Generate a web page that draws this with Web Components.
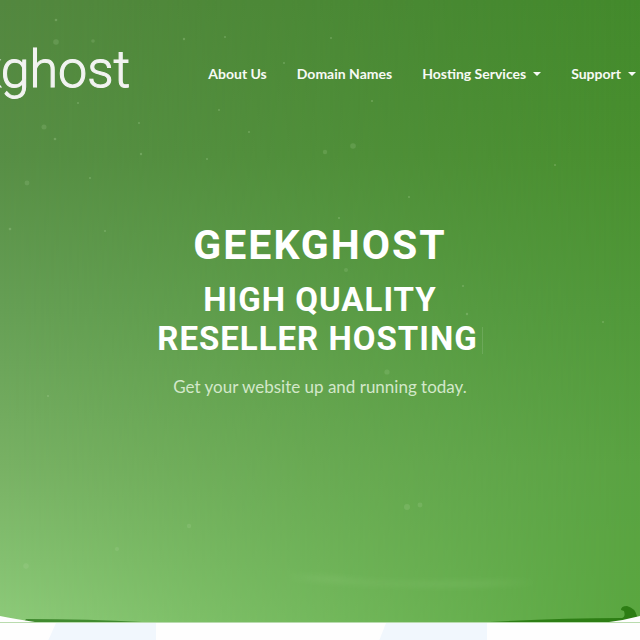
<!DOCTYPE html>
<html lang="en">
<head>
<meta charset="utf-8">
<meta name="viewport" content="width=device-width, initial-scale=1">
<title>GeekGhost</title>
<style>
body { margin: 0; background: #fefefe; font-family: Lato, "Open Sans", sans-serif; overflow: hidden; }
</style>
</head>
<body>
<hosting-page></hosting-page>
<script>
function define(name, html) {
  const template = document.createElement('template');
  template.innerHTML = html;
  customElements.define(name, class extends HTMLElement {
    constructor() {
      super();
      this.attachShadow({ mode: 'open' }).append(template.content.cloneNode(true));
    }
  });
}

define('brand-logo', `
<style>
:host { display: block; flex: none; }
a { display: block; color: #f2f3f1; font: 300 52px/72px Roboto, sans-serif; -webkit-text-stroke: 1px #f2f3f1; text-decoration: none; }
</style>
<a href="#" aria-label="geekghost home"><slot></slot></a>`);

define('nav-link', `
<style>
:host { display: block; flex: none; }
a { display: block; color: #f7faf5; font: 700 14px/20px Lato, sans-serif; text-decoration: none; white-space: nowrap; }
</style>
<a href="#"><slot></slot></a>`);

define('nav-menu', `
<style>
:host { display: block; flex: none; }
button { display: flex; align-items: center; gap: 7px; padding: 0; border: 0; background: none;
  color: #f7faf5; font: 700 14px/20px Lato, sans-serif; white-space: nowrap; }
svg { display: block; }
</style>
<button type="button" aria-haspopup="true"><slot></slot><svg width="8" height="4" viewBox="0 0 8 4" aria-hidden="true"><path d="M0 0H8L4 4Z" fill="currentColor"/></svg></button>`);

define('site-header', `
<style>
:host { display: flex; justify-content: flex-end; align-items: center; gap: 78px; padding: 34px 4px 0 0; }
nav { display: flex; align-items: center; gap: 30px; padding-top: 8px; }
</style>
<slot name="logo"></slot>
<nav aria-label="Main"><slot></slot></nav>`);

define('night-sky', `
<style>
:host { display: block; background: linear-gradient(#438a2c, #49902f 25%, #51993a 50%, #5aa342 75%, #5aa740); }
.left { width: 100%; height: 100%;
  background: linear-gradient(#53873f, #578e45 25%, #669f55 50%, #78b164 75%, #84c070 90%, #8dca79);
  -webkit-mask-image: linear-gradient(90deg, #000, transparent);
  mask-image: linear-gradient(90deg, #000, transparent); }
svg { position: absolute; inset: 0; width: 100%; height: 100%; }
</style>
<div class="left"></div>
<svg viewBox="0 0 640 622" preserveAspectRatio="none" aria-hidden="true">
<defs><filter id="haze" x="-10%" y="-100%" width="120%" height="300%"><feGaussianBlur stdDeviation="3"/></filter></defs>
<g fill="#b9dca8">
<g opacity=".28"><circle cx="56" cy="20" r="1.3"/><circle cx="184" cy="39" r="1.2"/><circle cx="225" cy="37" r="1"/><circle cx="55" cy="139" r="1.3"/><circle cx="141" cy="154" r="1.2"/><circle cx="90" cy="178" r="1"/><circle cx="10" cy="229" r="1.3"/><circle cx="105" cy="231" r="1"/><circle cx="249" cy="132" r="1"/><circle cx="372" cy="101" r="1.1"/><circle cx="207" cy="159" r="1"/><circle cx="339" cy="218" r="1.1"/><circle cx="463" cy="286" r="1"/><circle cx="467" cy="314" r="1.2"/><circle cx="603" cy="322" r="1"/><circle cx="555" cy="165" r="1"/><circle cx="331" cy="38" r="1"/><circle cx="284" cy="63" r="1"/><circle cx="409" cy="197" r="1"/><circle cx="219" cy="110" r="1"/><circle cx="139" cy="123" r="1"/><circle cx="78" cy="103" r="1"/><circle cx="48" cy="396" r="1.1"/></g>
<g opacity=".17"><circle cx="56" cy="42" r="2.8"/><circle cx="44" cy="127" r="2.5"/><circle cx="27" cy="183" r="2.4"/><circle cx="325" cy="152" r="2.2"/><circle cx="353" cy="146" r="2.8"/><circle cx="387" cy="372" r="2.6"/><circle cx="407" cy="507" r="3"/><circle cx="420" cy="505" r="2.4"/><circle cx="189" cy="526" r="2.2"/><circle cx="117" cy="549" r="2"/><circle cx="26" cy="566" r="2.7"/><circle cx="93" cy="41" r="1.8"/><circle cx="346" cy="270" r="2"/></g>
</g>
<path d="M285 577Q320 575 350 579T435 582T540 582L480 586Q400 587 330 582Z" fill="#a5d890" opacity=".2" filter="url(#haze)"/>
<path d="M26 619Q90 619 142 622H24Z" fill="#2e7a1e" opacity=".8"/>
<path d="M490 622Q560 618 622 618C625 617 625 614 624 611L621 610Q621 606 627 606Q635 608 637 616L640 622Z" fill="#28790f" opacity=".9"/>
<path d="M0 616Q15 619 35 622H0ZM640 616Q625 620 609 622H640Z" fill="#fefefe"/>
</svg>`);

define('hero-banner', `
<style>
:host { display: block; position: relative; padding-bottom: 223px; overflow: hidden; border-bottom: 1px solid #b9dbae; }
night-sky { position: absolute; inset: 0; }
.content { position: relative; }
.copy { padding: 114px 16px 0; text-align: center; color: #fff; }
h1, h2, p { margin: 0; }
h1 { font: 700 41px/50px Roboto, sans-serif; letter-spacing: 2px; }
h2 { margin-top: 10px; font: 700 33px/39px Roboto, sans-serif; letter-spacing: 1px; }
h2 span { display: block; }
.caret { display: inline-block; width: 1px; height: 27px; margin-left: 4px; background: #fff; opacity: .12; vertical-align: -4px; }
p { margin-top: 17px; font: 400 17px/24px Lato, sans-serif; color: #d3e8ca; }
</style>
<night-sky></night-sky>
<div class="content">
<slot name="header"></slot>
<div class="copy">
<h1>GEEKGHOST</h1>
<h2><span>HIGH QUALITY</span><span>RESELLER HOSTING<i class="caret"></i></span></h2>
<p>Get your website up and running today.</p>
</div>
</div>`);

define('feature-strip', `
<style>
:host { display: block; }
svg { display: block; width: 100%; }
</style>
<svg viewBox="0 0 640 18" aria-hidden="true"><path d="M56 0H156V18H48ZM386 0H487V18H379Z" fill="#f1f7fd"/></svg>`);

define('hosting-page', `
<style>:host { display: block; }</style>
<hero-banner>
<site-header slot="header">
<brand-logo slot="logo">kghost</brand-logo>
<nav-link>About Us</nav-link>
<nav-link>Domain Names</nav-link>
<nav-menu>Hosting Services</nav-menu>
<nav-menu>Support</nav-menu>
</site-header>
</hero-banner>
<feature-strip></feature-strip>`);
</script>
</body>
</html>
